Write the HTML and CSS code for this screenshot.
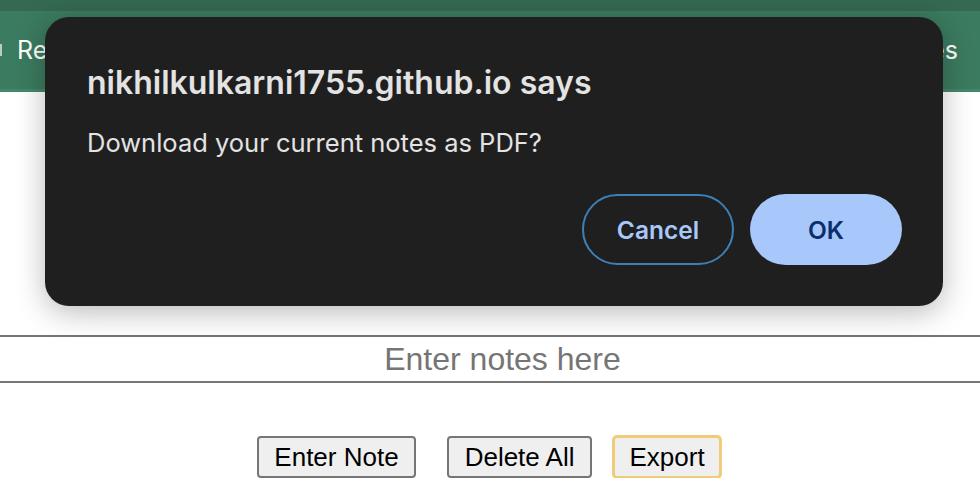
FILE: index.html
```html
<!DOCTYPE html>
<html lang="en">
<head>
<meta charset="utf-8">
<title>Notes</title>
<link rel="stylesheet" href="styles.css">
</head>
<body>
<div class="topstrip"></div>
<nav class="nav">
  <span class="nav-mark"></span>
  <a class="nav-link">Read Notes</a>
  <a class="nav-link nav-right">My Notes</a>
</nav>
<main class="main">
  <input class="notes-input" type="text" placeholder="Enter notes here">
  <div class="actions">
    <button class="btn btn-enter">Enter Note</button>
    <button class="btn btn-delete">Delete All</button>
    <button class="btn btn-focus">Export</button>
  </div>
</main>
<div class="dialog" role="dialog">
  <h2 class="dialog-title">nikhilkulkarni1755.github.io says</h2>
  <p class="dialog-msg">Download your current notes as PDF?</p>
  <div class="dialog-actions">
    <button class="dbtn dbtn-cancel">Cancel</button>
    <button class="dbtn dbtn-ok">OK</button>
  </div>
</div>
</body>
</html>
```
FILE: styles.css
```css
html, body {
  margin: 0;
  padding: 0;
  background: #ffffff;
  font-family: "Liberation Sans", Arial, sans-serif;
}

.topstrip {
  height: 11px;
  background: #356951;
}

.nav {
  height: 78px;
  background: #3b7b5f;
  border-bottom: 3px solid #45876a;
  display: flex;
  align-items: center;
  padding: 0 22px 0 0;
  font-family: Inter, "Noto Sans", sans-serif;
  font-size: 25px;
  color: #ffffff;
}

.nav-mark {
  width: 2px;
  height: 12px;
  background: #b9cdc4;
  margin-right: 15px;
}

.nav-link {
  color: #ffffff;
}

.nav-right {
  margin-left: auto;
}

.main {
  padding-top: 243px;
  display: flex;
  flex-direction: column;
  align-items: center;
}

.notes-input {
  box-sizing: border-box;
  width: calc(100% + 4px);
  margin: 0 -2px;
  height: 48px;
  border: 2px solid #767676;
  background: #ffffff;
  font-family: "Liberation Sans", Arial, sans-serif;
  font-size: 32px;
  text-align: center;
  padding: 0 0 0 25px;
  outline: none;
}

.notes-input::placeholder {
  color: #757575;
}

.actions {
  margin-top: 53px;
  display: flex;
  align-items: center;
  padding-right: 2px;
}

.btn {
  font-family: "Liberation Sans", Arial, sans-serif;
  font-size: 26px;
  line-height: 28px;
  padding: 5px 16px;
  border: 2px solid #767676;
  border-radius: 4px;
  background: #efefef;
  color: #000000;
  margin: 0;
}

.btn-enter {
  padding: 5px 15px;
}

.btn-delete {
  margin-left: 31px;
}

.btn-focus {
  margin-left: 21px;
  border-color: #f0cc78;
  box-shadow: 0 0 0 1px #f0cc78;
  padding: 5px 14px;
}

.dialog {
  position: absolute;
  top: 17px;
  left: 45px;
  width: 898px;
  height: 289px;
  box-sizing: border-box;
  background: #1f1f1f;
  border-radius: 24px;
  box-shadow: 0 6px 30px rgba(0, 0, 0, 0.28);
  padding: 46px 41px 41px 42px;
  font-family: Inter, "Noto Sans", sans-serif;
  display: flex;
  flex-direction: column;
}

.dialog-title {
  margin: 0;
  font-size: 32px;
  line-height: 40px;
  font-weight: 600;
  color: #e3e3e3;
}

.dialog-msg {
  margin: 25px 0 0;
  font-size: 25.5px;
  line-height: 30px;
  color: #e3e3e3;
}

.dialog-actions {
  margin-top: auto;
  display: flex;
  justify-content: flex-end;
  gap: 16px;
}

.dbtn {
  width: 152px;
  height: 71px;
  border-radius: 36px;
  font-family: Inter, "Noto Sans", sans-serif;
  font-size: 24.5px;
  font-weight: 600;
  cursor: pointer;
}

.dbtn-cancel {
  background: transparent;
  border: 2px solid #3d80b8;
  color: #a8c7fa;
}

.dbtn-ok {
  background: #a8c7fa;
  border: none;
  color: #0b2e6e;
}
```
